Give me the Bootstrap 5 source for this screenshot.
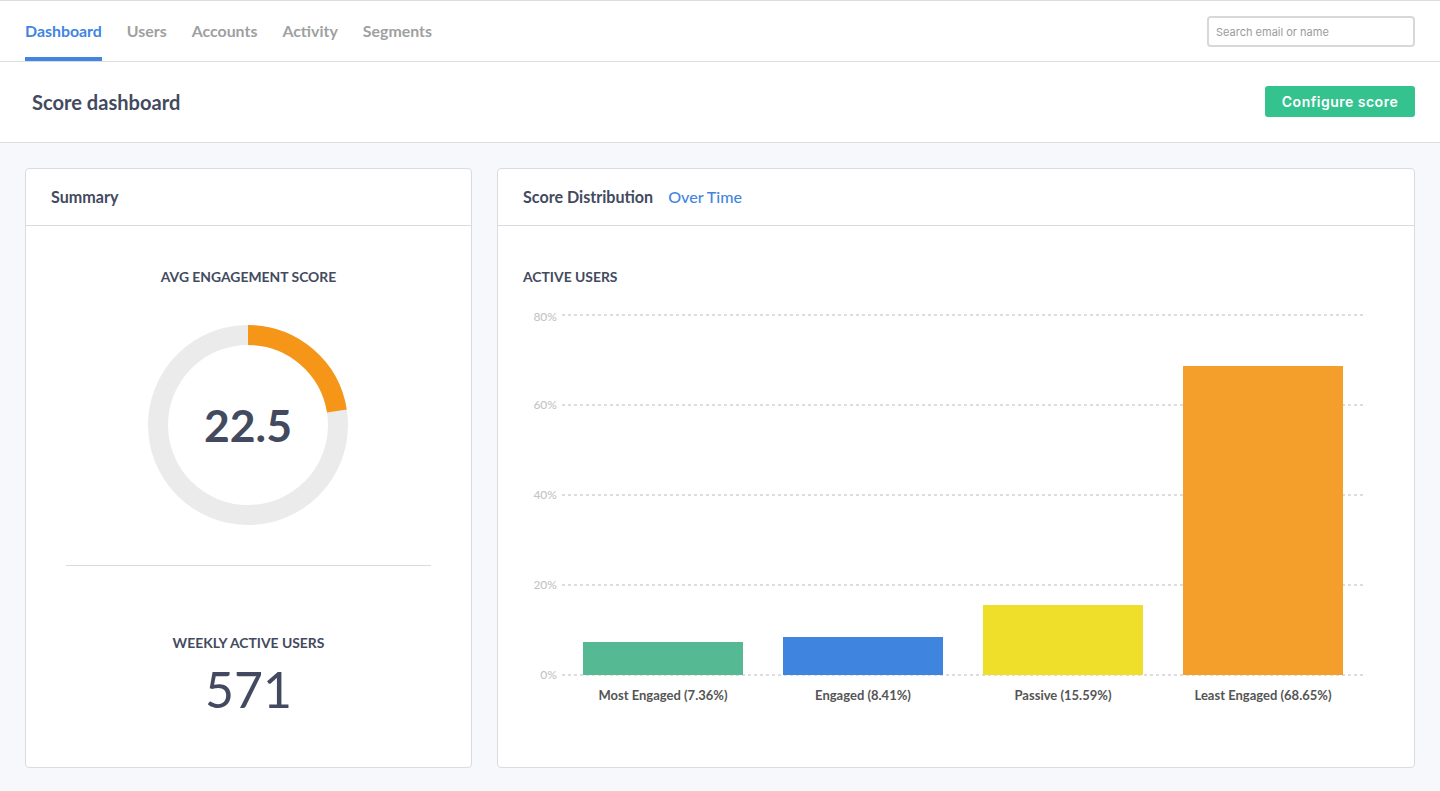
<!DOCTYPE html>
<html lang="en">
<head>
    <meta charset="UTF-8" />
    <meta name="viewport" content="width=device-width, initial-scale=1" />
    <title>Score dashboard</title>
    <link href="https://cdn.jsdelivr.net/npm/bootstrap@5.3.0/dist/css/bootstrap.min.css" rel="stylesheet" />
    <style>
        body { background: #f7f8fc; font-family: "Lato", sans-serif; color: #434a60; height: 791px; overflow: hidden; }
        .top-bar { height: 62px; background: #fff; border-top: 1px solid #ddd; border-bottom: 1px solid #ddd; padding: 0 25px; }
        .top-tabs { gap: 25px; }
        .top-tabs .nav-link { padding: 0; height: 60px; line-height: 60px; font-size: 15.9px; font-weight: 700; color: #a0a0a0; }
        .top-tabs .nav-link.active { color: #4285df; border-bottom: 4px solid #4285df; }
        .search-box { width: 208px; height: 31px; margin-top: 15px; border: 2px solid #d8d8d8; border-radius: 4px; padding: 0 7px; font-family: "Inter", sans-serif; font-size: 11px; box-shadow: none; }
        .search-box::placeholder { color: #9b9b9b; }
        .page-head { height: 81px; background: #fff; border-bottom: 1px solid #ddd; padding: 0 25px 0 32px; }
        .page-title { font-size: 20.1px; font-weight: 700; color: #434a60; margin: 0; }
        .btn-config { width: 150px; height: 31px; margin-bottom: 2px; padding: 0; background: #34c28f; border: 0; border-radius: 3px; color: #fff; font-family: "Inter", sans-serif; font-size: 14px; font-weight: 600; letter-spacing: .5px; }
        .page-main { padding: 25px; gap: 25px; }
        .panel { height: 600px; border: 1px solid #d9dbe0; border-radius: 4px; background: #fff; }
        .panel-left { width: 447px; flex: none; }
        .panel .card-header { height: 57px; padding: 0 25px; background: #fff; border-bottom: 1px solid #d9dbe0; font-size: 16.1px; font-weight: 700; gap: 15px; color: #434a60; }
        .over-link { color: #4285df; font-weight: 500; text-decoration: none; }
        .stat-label { font-size: 13.9px; font-weight: 700; color: #434a60; text-transform: uppercase; margin: 0; }
        .avg-label { margin-top: 41px; }
        .gauge-wrap { margin: 37px 1px 0 0; }
        .gauge-num { font-size: 44.5px; font-weight: 700; fill: #434a60; }
        .split { width: 365px; margin: 40px auto 0; border-top: 1px solid #d9dbe0; }
        .weekly { margin-top: 67px; }
        .weekly-num { font-size: 50px; font-weight: 400; line-height: 1; margin-top: 10px; color: #434a60; }
        .plot-title { margin: 41px 0 0 25px; }
        .plot { display: block; margin-top: 12px; }
        .tick { font-size: 12px; font-weight: 500; fill: #c4c4c4; text-anchor: end; }
        .bar-name { font-size: 13px; font-weight: 700; fill: #555; text-anchor: middle; }
    </style>
</head>
<body>
<nav class="top-bar d-flex align-items-start justify-content-between">
    <ul class="nav top-tabs">
        <li class="nav-item"><a class="nav-link active" href="#">Dashboard</a></li>
        <li class="nav-item"><a class="nav-link" href="#">Users</a></li>
        <li class="nav-item"><a class="nav-link" href="#">Accounts</a></li>
        <li class="nav-item"><a class="nav-link" href="#">Activity</a></li>
        <li class="nav-item"><a class="nav-link" href="#">Segments</a></li>
    </ul>
    <input type="text" class="form-control search-box" placeholder="Search email or name" />
</nav>

<header class="page-head d-flex align-items-center justify-content-between">
    <h1 class="page-title">Score dashboard</h1>
    <button type="button" class="btn btn-config">Configure score</button>
</header>

<main class="page-main d-flex">
    <section class="card panel panel-left">
        <div class="card-header d-flex align-items-center">Summary</div>
        <div class="text-center">
            <p class="stat-label avg-label">Avg engagement score</p>
            <div class="gauge-wrap">
                <svg width="200" height="200" viewBox="0 0 200 200">
                    <circle cx="100" cy="100" r="90" fill="none" stroke="#ebebeb" stroke-width="20" />
                    <circle cx="100" cy="100" r="90" fill="none" stroke="#f59619" stroke-width="20" pathLength="100" stroke-dasharray="22.5 77.5" transform="rotate(-90 100 100)" />
                    <text class="gauge-num" x="100" y="116.5" text-anchor="middle">22.5</text>
                </svg>
            </div>
            <div class="split"></div>
            <div class="weekly">
                <p class="stat-label">Weekly active users</p>
                <div class="weekly-num">571</div>
            </div>
        </div>
    </section>

    <section class="card panel flex-grow-1">
        <div class="card-header d-flex align-items-center">
            <span>Score Distribution</span>
            <a class="over-link" href="#">Over Time</a>
        </div>
        <p class="stat-label plot-title">Active users</p>
        <!-- x and y are page px minus 498 / 300 -->
        <svg class="plot" width="916" height="420" viewBox="0 0 916 420">
            <g stroke="#d2d2d2" stroke-width="1.3" stroke-dasharray="3 3">
                <line x1="64" x2="865" y1="15" y2="15" />
                <line x1="64" x2="865" y1="105" y2="105" />
                <line x1="64" x2="865" y1="195" y2="195" />
                <line x1="64" x2="865" y1="285" y2="285" />
                <line x1="64" x2="865" y1="375" y2="375" />
            </g>
            <text class="tick" x="59" y="21">80%</text>
            <text class="tick" x="59" y="109">60%</text>
            <text class="tick" x="59" y="199">40%</text>
            <text class="tick" x="59" y="289">20%</text>
            <text class="tick" x="59" y="379">0%</text>
            <rect x="85" y="342" width="160" height="33" fill="#55ba94" />
            <rect x="285" y="337" width="160" height="38" fill="#3f84de" />
            <rect x="485" y="305" width="160" height="70" fill="#efdf2a" />
            <rect x="685" y="66" width="160" height="309" fill="#f49f2b" />
            <text class="bar-name" x="165" y="400">Most Engaged (7.36%)</text>
            <text class="bar-name" x="365" y="400">Engaged (8.41%)</text>
            <text class="bar-name" x="565" y="400">Passive (15.59%)</text>
            <text class="bar-name" x="765" y="400">Least Engaged (68.65%)</text>
        </svg>
    </section>
</main>

<script src="https://cdn.jsdelivr.net/npm/bootstrap@5.3.0/dist/js/bootstrap.bundle.min.js"></script>
</body>
</html>
